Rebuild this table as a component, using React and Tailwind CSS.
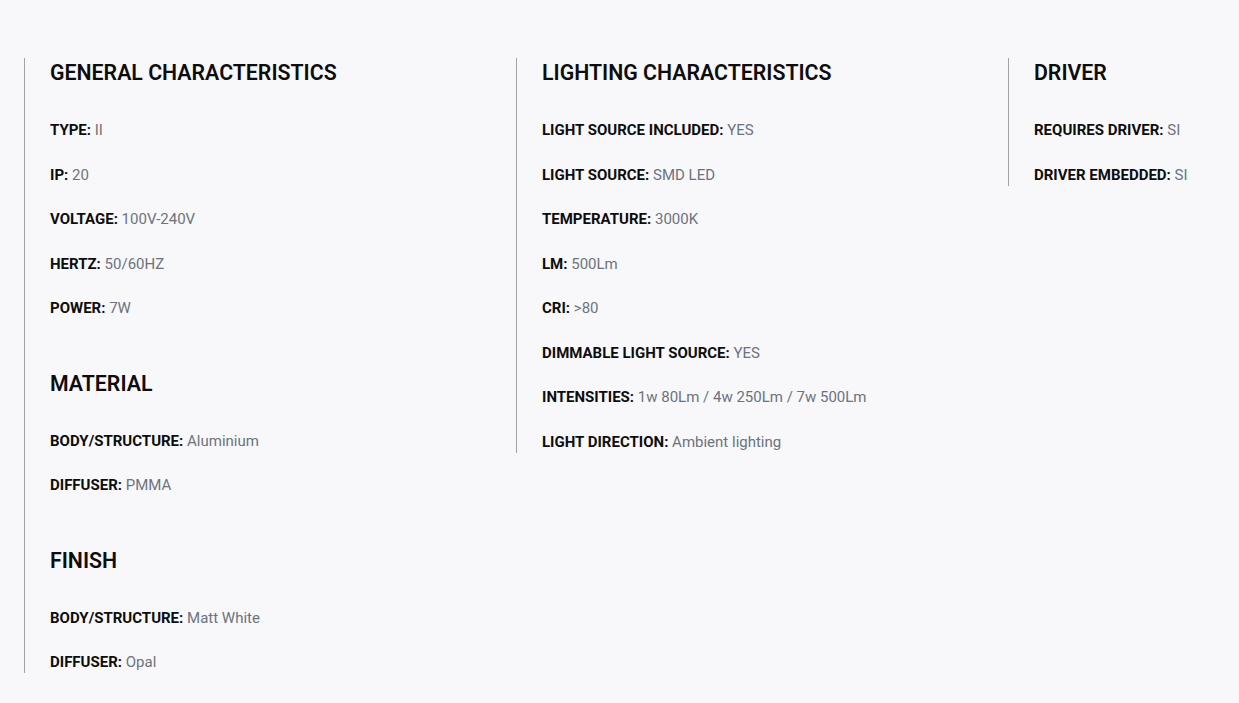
const columns = [
  [
    {
      title: "GENERAL CHARACTERISTICS",
      rows: [
        ["TYPE", "II"],
        ["IP", "20"],
        ["VOLTAGE", "100V-240V"],
        ["HERTZ", "50/60HZ"],
        ["POWER", "7W"],
      ],
    },
    {
      title: "MATERIAL",
      rows: [
        ["BODY/STRUCTURE", "Aluminium"],
        ["DIFFUSER", "PMMA"],
      ],
    },
    {
      title: "FINISH",
      rows: [
        ["BODY/STRUCTURE", "Matt White"],
        ["DIFFUSER", "Opal"],
      ],
    },
  ],
  [
    {
      title: "LIGHTING CHARACTERISTICS",
      rows: [
        ["LIGHT SOURCE INCLUDED", "YES"],
        ["LIGHT SOURCE", "SMD LED"],
        ["TEMPERATURE", "3000K"],
        ["LM", "500Lm"],
        ["CRI", ">80"],
        ["DIMMABLE LIGHT SOURCE", "YES"],
        ["INTENSITIES", "1w 80Lm / 4w 250Lm / 7w 500Lm"],
        ["LIGHT DIRECTION", "Ambient lighting"],
      ],
    },
  ],
  [
    {
      title: "DRIVER",
      rows: [
        ["REQUIRES DRIVER", "SI"],
        ["DRIVER EMBEDDED", "SI"],
      ],
    },
  ],
];

function Section({ title, rows }) {
  return (
    <div>
      <h3 className="text-[21.3px] leading-[30px] font-semibold text-[#0d0d0d]">
        {title}
      </h3>
      <ul className="mt-[31px] flex flex-col gap-[22.5px]">
        {rows.map(([label, value], i) => (
          <li key={i} className="text-[15px] leading-[22px]">
            <span className="font-bold text-[#0d0d0d]">{label}:</span>{" "}
            <span className="text-[#6c737c]">{value}</span>
          </li>
        ))}
      </ul>
    </div>
  );
}

export default function App() {
  return (
    <div
      className="min-h-[703px] w-full overflow-hidden bg-[#f8f8fa] pt-[58px] pl-[24px]"
      style={{ fontFamily: "Roboto, 'Liberation Sans', sans-serif" }}
    >
      <div className="flex items-start">
        {columns.map((sections, ci) => (
          <div
            key={ci}
            className="w-[492px] shrink-0 border-l border-[#a3a3a3] pl-[25px] flex flex-col gap-[49.5px]"
          >
            {sections.map((s) => (
              <Section key={s.title} {...s} />
            ))}
          </div>
        ))}
      </div>
    </div>
  );
}
